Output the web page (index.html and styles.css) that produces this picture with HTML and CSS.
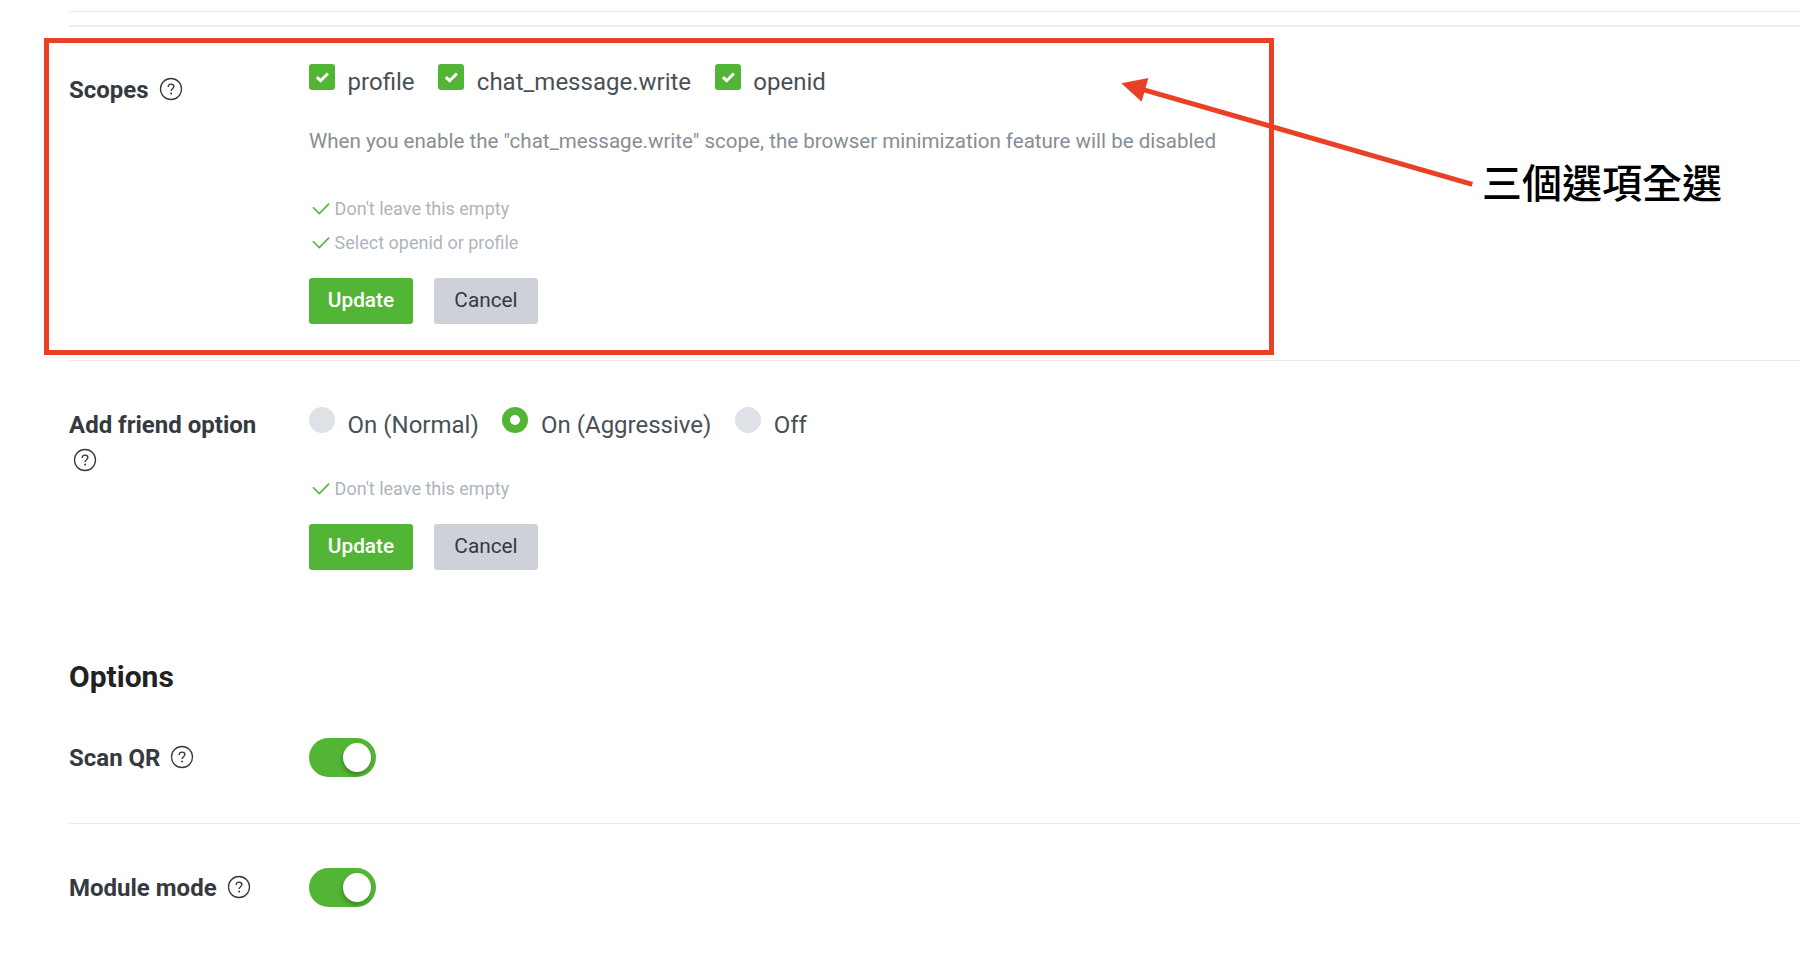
FILE: index.html
```html
<!DOCTYPE html>
<html lang="en">
<head>
<meta charset="utf-8">
<title>LIFF settings</title>
<link rel="stylesheet" href="styles.css">
</head>
<body>
<svg class="defs" width="0" height="0" aria-hidden="true">
  <symbol id="help" viewBox="0 0 24 24">
    <circle cx="12" cy="12" r="10.5" fill="none" stroke="#353a40" stroke-width="1.3"/>
    <path d="M9.2 9.9C9.2 8.1 10.4 7.1 12 7.1c1.7 0 2.9 1 2.9 2.5 0 2.1-2.8 2.2-2.8 4.4" fill="none" stroke="#353a40" stroke-width="1.4"/>
    <circle cx="12.1" cy="16.4" r="1" fill="#353a40"/>
  </symbol>
  <symbol id="tick" viewBox="0 0 18 14">
    <path d="M1 5.2l6.3 6.3L17.1 1.6" fill="none" stroke="#53b535" stroke-width="1.6"/>
  </symbol>
  <symbol id="check" viewBox="0 0 26 26">
    <path d="M7.9 13.1l3.7 3.6 7.3-7.2" fill="none" stroke="#fff" stroke-width="3"/>
  </symbol>
</svg>
<main class="page">
  <div class="rule-thin"></div>
  <div class="rule-thick"></div>

  <section class="row row-scopes">
    <h3 class="label">Scopes <svg class="help"><use href="#help"/></svg></h3>
    <div class="field">
      <div class="choices">
        <label class="choice"><span class="box"><svg><use href="#check"/></svg></span><span>profile</span></label>
        <label class="choice"><span class="box"><svg><use href="#check"/></svg></span><span>chat_message.write</span></label>
        <label class="choice"><span class="box"><svg><use href="#check"/></svg></span><span>openid</span></label>
      </div>
      <p class="note">When you enable the "chat_message.write" scope, the browser minimization feature will be disabled</p>
      <ul class="rules">
        <li><svg class="tick"><use href="#tick"/></svg>Don't leave this empty</li>
        <li><svg class="tick"><use href="#tick"/></svg>Select openid or profile</li>
      </ul>
      <div class="actions"><button class="btn primary">Update</button><button class="btn">Cancel</button></div>
    </div>
  </section>

  <section class="row row-friend">
    <h3 class="label">Add friend option <svg class="help"><use href="#help"/></svg></h3>
    <div class="field">
      <div class="choices">
        <label class="choice"><span class="radio"></span><span>On (Normal)</span></label>
        <label class="choice"><span class="radio on"></span><span>On (Aggressive)</span></label>
        <label class="choice"><span class="radio"></span><span>Off</span></label>
      </div>
      <ul class="rules">
        <li><svg class="tick"><use href="#tick"/></svg>Don't leave this empty</li>
      </ul>
      <div class="actions"><button class="btn primary">Update</button><button class="btn">Cancel</button></div>
    </div>
  </section>

  <h2 class="heading">Options</h2>
  <section class="row row-toggle row-scan">
    <h3 class="label">Scan QR <svg class="help"><use href="#help"/></svg></h3>
    <span class="toggle"><span class="knob"></span></span>
  </section>
  <section class="row row-toggle row-module">
    <h3 class="label">Module mode <svg class="help"><use href="#help"/></svg></h3>
    <span class="toggle"><span class="knob"></span></span>
  </section>
</main>

<div class="highlight"></div>
<svg class="arrow" width="370" height="120" viewBox="1115 72 370 120">
  <path d="M1144 89.8L1472.3 184.3" stroke="#ea4025" stroke-width="5" fill="none"/>
  <path d="M1121.3 83.2L1148.4 78L1141.6 101.8Z" fill="#ea4025"/>
</svg>
<div class="callout" lang="zh-Hant">三個選項全選</div>
</body>
</html>
```

FILE: styles.css
```css
* { box-sizing: border-box; }
body {
  margin: 0;
  width: 1800px;
  height: 970px;
  overflow: hidden;
  position: relative;
  background: #fff;
  font-family: Roboto, "Noto Sans CJK TC", sans-serif;
}
h2, h3, p, ul { margin: 0; padding: 0; }
ul { list-style: none; }
.defs { position: absolute; }
.page { padding: 11px 0 0 69px; }
.rule-thin { height: 1px; background: #e8e8e8; }
.rule-thick { height: 2px; margin-top: 13px; background: #eee; }

.row { display: grid; grid-template-columns: 240px 1fr; align-items: start; }
.row-scopes { height: 334px; padding-top: 37px; border-bottom: 1px solid #eaebec; }
.row-friend { height: 286px; padding-top: 46px; }

.label { width: 200px; font-size: 24px; line-height: 36px; font-weight: 700; color: #353a40; }
.row-scopes .label { padding-top: 8px; }
.help { width: 24px; height: 24px; margin-left: 4px; vertical-align: -3px; }

.choices { display: flex; gap: 23.7px; height: 36px; }
.choice { display: flex; gap: 12.6px; font-size: 24px; line-height: 36px; color: #495057; white-space: nowrap; }
.box, .radio { width: 26px; height: 26px; flex: none; }
.box { background: #53b535; border-radius: 3px; }
.box svg { display: block; width: 26px; height: 26px; }
.radio { border-radius: 50%; background: #dee2e6; }
.radio.on { background: #53b535; display: grid; place-items: center; }
.radio.on::after { content: ""; width: 10px; height: 10px; border-radius: 50%; background: #fff; }

.note { margin-top: 25px; font-size: 20.55px; line-height: 32px; color: #868e96; white-space: nowrap; }
.rules { margin-top: 35px; font-size: 18px; line-height: 34px; color: #adb5bd; }
.rules li { display: flex; align-items: center; height: 34px; }
.tick { width: 18px; height: 14px; margin: 0 4.6px 0 3px; }
.row-friend .rules { margin-top: 29px; }
.actions { display: flex; gap: 21px; margin-top: 18px; }
.btn {
  width: 104px; height: 46px; padding: 0 0 2px; border: 0; border-radius: 3px;
  background: #ced2d8; color: #353a40; font: 400 20.8px/44px Roboto, sans-serif;
}
.btn.primary { background: #53b535; color: #fff; font-weight: 500; }

.heading { height: 91px; padding-top: 10px; font-size: 30px; line-height: 40px; font-weight: 700; color: #222; }
.row-toggle .label { padding-top: 2px; }
.row-scan { height: 86px; border-bottom: 1px solid #eaebec; }
.row-module { padding-top: 44px; }
.toggle { width: 67px; height: 39px; padding: 5px; border-radius: 20px; background: #53b535; display: flex; justify-content: flex-end; }
.knob { width: 28px; height: 29px; border-radius: 50%; background: #fff; box-shadow: -1px 3px 4px rgba(0, 0, 0, .25); }

/* Annotation layer over the settings form */
.highlight { position: absolute; left: 44px; top: 38px; width: 1230px; height: 317px; border: 5px solid #ea4025; }
.arrow { position: absolute; left: 1115px; top: 72px; }
.callout {
  position: absolute; left: 1482px; top: 154px; white-space: nowrap;
  font: 500 40px/54px "Noto Sans CJK TC", sans-serif; color: #000;
}
```
